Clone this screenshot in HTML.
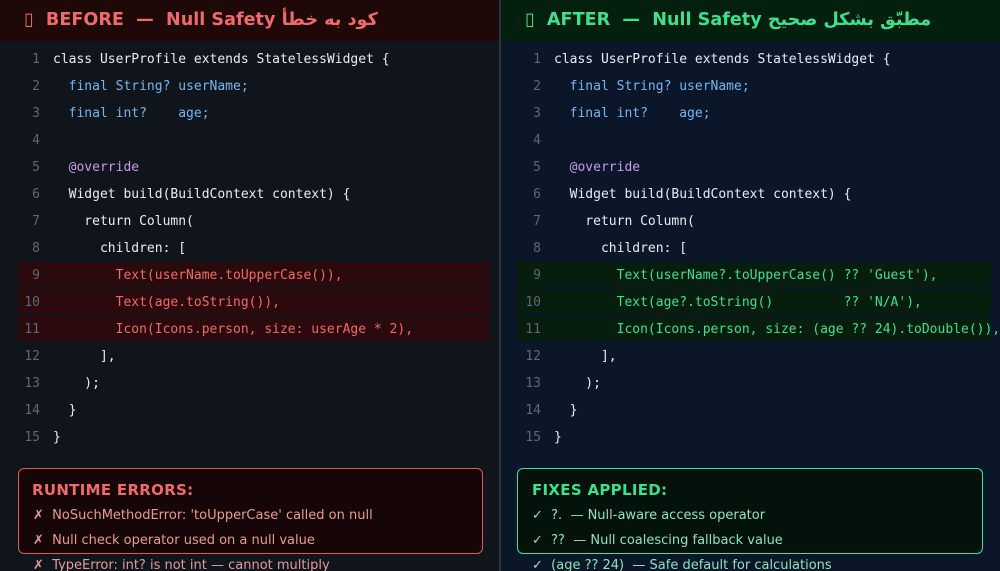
<!DOCTYPE html>
<html><head><meta charset="utf-8"><style>
*{margin:0;padding:0;box-sizing:border-box}
body{width:1000px;height:571px;overflow:hidden;background:#0f141b;position:relative;font-family:"Liberation Sans","DejaVu Sans",sans-serif}
.p{position:absolute;top:0;height:571px;width:500px;overflow:hidden}
.l{left:0;background:#10151c}
.r{left:501px;width:499px;background:#0b1628}
.div{position:absolute;left:499px;top:0;width:2px;height:571px;background:#2b323b}
.hd{position:absolute;left:0;top:0;width:100%;height:41px;font:bold 17.6px "DejaVu Sans",sans-serif;padding-left:24px;line-height:41px;white-space:pre}
.l .hd{background:#1e0808;color:#f06a6a}
.r .hd{background:#03200f;color:#3ee08f}
.ln{position:absolute;font:13px "DejaVu Sans Mono",monospace;white-space:pre;height:27px;line-height:27px;margin-top:2px}
.n{position:absolute;width:40px;text-align:right;color:#5f6873;left:0}
.c{position:absolute;left:53px;color:#e6edf3}
.b{color:#72b7f5}.pu{color:#c79af0}.rd{color:#f06a6a}.gr{color:#3ee08f}
.hl{position:absolute;height:25px}
.l .hl{left:18px;width:472px;background:#2a0a0d}
.r .hl{left:16px;width:474px;background:#071d0e}
.box{position:absolute;top:468px;height:86px;border-radius:6px;border:1.5px solid}
.l .box{left:18px;width:465px;border-color:#e05555;background:#170607}
.r .box{left:16px;width:466px;border-color:#3ee0a0;background:#04120c}
.bt{position:absolute;left:32px;top:481px;font:bold 15px "DejaVu Sans",sans-serif;letter-spacing:.3px}
.it{position:absolute;left:33px;font:13px "DejaVu Sans",sans-serif;white-space:pre;margin-top:2px}
.l .bt{color:#f06a6a}.r .bt{color:#3ee08f;left:31px}
.l .it{color:#e89a9a}.r .it{color:#8fe3bb;left:31px}
</style></head><body>
<div class="p l">
<div class="hd">▯  BEFORE  —  Null Safety كود به خطأ</div>
<div class="hl" style="top:262px"></div><div class="hl" style="top:289px"></div><div class="hl" style="top:316px"></div>
<div class="ln" style="top:44px"><span class="n">1</span><span class="c">class UserProfile extends StatelessWidget {</span></div>
<div class="ln" style="top:71px"><span class="n">2</span><span class="c b">  final String? userName;</span></div>
<div class="ln" style="top:98px"><span class="n">3</span><span class="c b">  final int?    age;</span></div>
<div class="ln" style="top:125px"><span class="n">4</span></div>
<div class="ln" style="top:152px"><span class="n">5</span><span class="c pu">  @override</span></div>
<div class="ln" style="top:179px"><span class="n">6</span><span class="c">  Widget build(BuildContext context) {</span></div>
<div class="ln" style="top:206px"><span class="n">7</span><span class="c">    return Column(</span></div>
<div class="ln" style="top:233px"><span class="n">8</span><span class="c">      children: [</span></div>
<div class="ln" style="top:260px"><span class="n">9</span><span class="c rd">        Text(userName.toUpperCase()),</span></div>
<div class="ln" style="top:287px"><span class="n">10</span><span class="c rd">        Text(age.toString()),</span></div>
<div class="ln" style="top:314px"><span class="n">11</span><span class="c rd">        Icon(Icons.person, size: userAge * 2),</span></div>
<div class="ln" style="top:341px"><span class="n">12</span><span class="c">      ],</span></div>
<div class="ln" style="top:368px"><span class="n">13</span><span class="c">    );</span></div>
<div class="ln" style="top:395px"><span class="n">14</span><span class="c">  }</span></div>
<div class="ln" style="top:422px"><span class="n">15</span><span class="c">}</span></div>
<div class="box"></div>
<div class="bt">RUNTIME ERRORS:</div>
<div class="it" style="top:506px">✗  NoSuchMethodError: 'toUpperCase' called on null</div>
<div class="it" style="top:531px">✗  Null check operator used on a null value</div>
<div class="it" style="top:556px">✗  TypeError: int? is not int — cannot multiply</div>
</div>
<div class="div"></div>
<div class="p r">
<div class="hd">▯  AFTER  —  Null Safety مطبّق بشكل صحيح</div>
<div class="hl" style="top:262px"></div><div class="hl" style="top:289px"></div><div class="hl" style="top:316px"></div>
<div class="ln" style="top:44px"><span class="n">1</span><span class="c">class UserProfile extends StatelessWidget {</span></div>
<div class="ln" style="top:71px"><span class="n">2</span><span class="c b">  final String? userName;</span></div>
<div class="ln" style="top:98px"><span class="n">3</span><span class="c b">  final int?    age;</span></div>
<div class="ln" style="top:125px"><span class="n">4</span></div>
<div class="ln" style="top:152px"><span class="n">5</span><span class="c pu">  @override</span></div>
<div class="ln" style="top:179px"><span class="n">6</span><span class="c">  Widget build(BuildContext context) {</span></div>
<div class="ln" style="top:206px"><span class="n">7</span><span class="c">    return Column(</span></div>
<div class="ln" style="top:233px"><span class="n">8</span><span class="c">      children: [</span></div>
<div class="ln" style="top:260px"><span class="n">9</span><span class="c gr">        Text(userName?.toUpperCase() ?? 'Guest'),</span></div>
<div class="ln" style="top:287px"><span class="n">10</span><span class="c gr">        Text(age?.toString()         ?? 'N/A'),</span></div>
<div class="ln" style="top:314px"><span class="n">11</span><span class="c gr">        Icon(Icons.person, size: (age ?? 24).toDouble()),</span></div>
<div class="ln" style="top:341px"><span class="n">12</span><span class="c">      ],</span></div>
<div class="ln" style="top:368px"><span class="n">13</span><span class="c">    );</span></div>
<div class="ln" style="top:395px"><span class="n">14</span><span class="c">  }</span></div>
<div class="ln" style="top:422px"><span class="n">15</span><span class="c">}</span></div>
<div class="box"></div>
<div class="bt">FIXES APPLIED:</div>
<div class="it" style="top:506px">✓  ?.  — Null-aware access operator</div>
<div class="it" style="top:531px">✓  ??  — Null coalescing fallback value</div>
<div class="it" style="top:556px">✓  (age ?? 24)  — Safe default for calculations</div>
</div>
</body></html>
